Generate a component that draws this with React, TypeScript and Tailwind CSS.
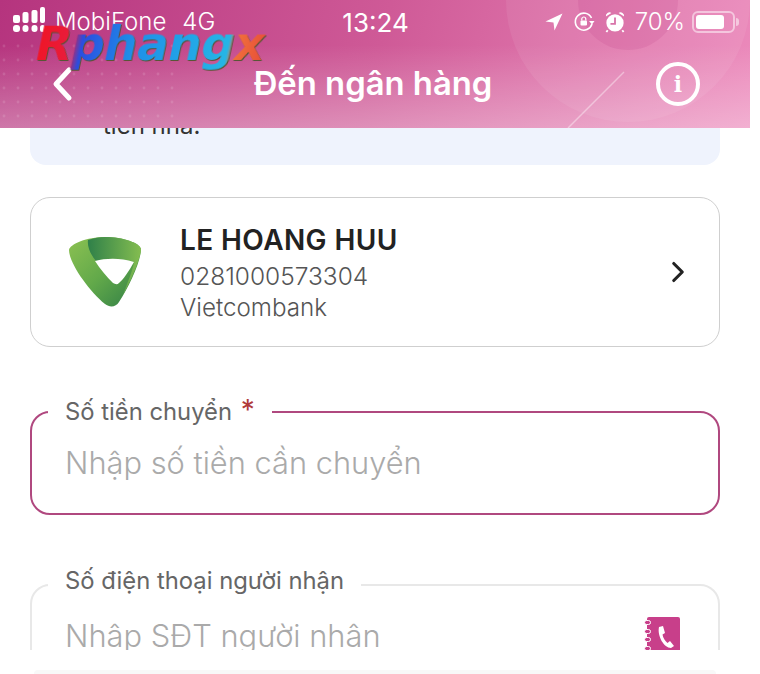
import { ChevronRight } from "lucide-react";

const SignalIcon = () => (
  <svg className="-mt-[5px]" width="33" height="26" viewBox="0 0 33 26" fill="white">
    <rect x="0" y="8" width="7" height="8" rx="2" />
    <rect x="0" y="18" width="7" height="7" rx="3" />
    <rect x="9.5" y="5" width="6" height="11" rx="2" />
    <rect x="9.5" y="18" width="6" height="7" rx="3" />
    <rect x="18.5" y="3" width="6" height="13" rx="2" />
    <rect x="18.5" y="18" width="6" height="7" rx="3" />
    <rect x="27" y="0" width="5" height="16" rx="2" />
    <rect x="27" y="18" width="5" height="7" rx="2.5" />
  </svg>
);

const LocationIcon = () => (
  <svg width="18" height="18" viewBox="0 0 18 18" fill="white">
    <path d="M17.5 0.5 L0.5 8.5 L8.5 9.5 L9.5 17.5 Z" />
  </svg>
);

const RotationLockIcon = () => (
  <svg width="22" height="22" viewBox="0 0 22 22" fill="none" stroke="white" strokeWidth="1.6">
    <path d="M19 13 A8.5 8.5 0 1 1 18.5 7" />
    <path d="M21.5 10 L16 10 L19 13.5 Z" fill="white" stroke="none" />
    <rect x="7.5" y="9.5" width="6.5" height="5" rx="1" fill="white" stroke="none" />
    <path d="M8.8 9.5 V8 a2 2 0 0 1 4 0 V9.5" strokeWidth="1.2" />
  </svg>
);

const AlarmIcon = () => (
  <svg width="20" height="22" viewBox="0 0 22 24" fill="white">
    <circle cx="11" cy="13" r="9.5" />
    <path d="M1 6 A4 4 0 0 1 7 2 Z" />
    <path d="M21 6 A4 4 0 0 0 15 2 Z" />
    <path d="M11 7 V14 H6" stroke="#d873a9" strokeWidth="2" fill="none" />
    <path d="M3 21 L1.5 23 M19 21 L20.5 23" stroke="white" strokeWidth="2" />
  </svg>
);

const VcbLogo = () => (
  <svg width="72" height="70" viewBox="0 0 72 70">
    <defs>
      <linearGradient id="vcbA" x1="0" y1="0" x2="1" y2="1">
        <stop offset="0%" stopColor="#8cc152" />
        <stop offset="50%" stopColor="#62a94a" />
        <stop offset="100%" stopColor="#2f7d46" />
      </linearGradient>
      <linearGradient id="vcbB" x1="0" y1="0" x2="1" y2="0">
        <stop offset="0%" stopColor="#2f8049" />
        <stop offset="100%" stopColor="#84bd50" />
      </linearGradient>
    </defs>
    <path
      d="M0 13 C1 7 18 0 36 0 C54 0 71 6 72 12 C72 24 60 50 50 65 C47 70 41 71 36 67 C20 54 0 26 0 13 Z"
      fill="url(#vcbA)"
    />
    <path
      d="M19 3 C25 1 31 0 36 0 C54 0 71 6 72 12 C72 20 62 44 54 58 C60 42 64 32 65 25 C52 21 38 21 27 24 C22 18 18 10 19 3 Z"
      fill="url(#vcbB)"
    />
    <path d="M26 24 C38 21 52 21 65 25 C60 34 54 43 50 46 C48 48 46 47 44 46 C38 40 31 32 26 24 Z" fill="white" />
  </svg>
);

const ContactBookIcon = () => (
  <div className="relative mt-[3px] flex h-[34px] w-[33px] items-start justify-center rounded-t-[2px] bg-[#c83f8a] pt-[8px]">
    <svg className="ml-[3px]" width="18" height="24" viewBox="0 0 18 24" fill="white">
      <path d="M3 2 L7 1 L9 8 L6.5 9.5 C7 13 9 16 11.5 18 L14 16 L18 21 L15 23 C8 23 1 11 3 2 Z" />
    </svg>
    <div className="absolute left-[-3px] top-[3px] flex flex-col gap-[3.5px]">
      {[0, 1, 2, 3].map((i) => (
        <div key={i} className="h-[5px] w-[7px] rounded-full border border-white bg-[#c83f8a]" />
      ))}
    </div>
  </div>
);

const App = () => {
  return (
    <div className="relative h-[674px] w-[760px] overflow-hidden bg-white font-['Inter',sans-serif]">
      <div className="w-[750px]">
        {/* Header */}
        <header className="relative z-10 h-[128px] overflow-hidden bg-[linear-gradient(105deg,#b5347e_0%,#cf5a97_50%,#ec8bbc_100%)] text-white">
          <div className="absolute inset-0 bg-[linear-gradient(180deg,rgba(255,255,255,0)_35%,rgba(255,255,255,0.32)_100%)]" />
          <svg className="absolute inset-0" width="750" height="128">
            <defs>
              <pattern id="dots" width="14" height="14" patternUnits="userSpaceOnUse">
                <circle cx="4" cy="4" r="1.4" fill="white" fillOpacity="0.12" />
              </pattern>
            </defs>
            <rect x="0" y="38" width="180" height="80" fill="url(#dots)" />
            <circle cx="628" cy="0" r="122" fill="white" fillOpacity="0.07" />
            <circle cx="628" cy="0" r="50" fill="#b5347e" fillOpacity="0.14" />
            <path d="M568 128 L624 72" stroke="white" strokeOpacity="0.4" strokeWidth="1.5" />
          </svg>
          <div className="relative flex h-[44px] items-center justify-between pl-[13px] pr-[13px] text-[24px] font-light">
            <div className="flex w-[214px] items-center gap-[9px]">
              <SignalIcon />
              <span>MobiFone</span>
              <span className="ml-[7px]">4G</span>
            </div>
            <span className="ml-[-3px] text-[26px] font-normal">13:24</span>
            <div className="flex w-[210px] items-center justify-end gap-[10px]">
              <LocationIcon />
              <RotationLockIcon />
              <AlarmIcon />
              <span>70%</span>
              <div className="relative ml-[-3px] mr-[2px] flex h-[22px] w-[43px] items-center rounded-[6px] border-2 border-white/50 p-[2px]">
                <div className="h-full w-[28px] rounded-[3px] bg-white" />
                <div className="absolute right-[-6px] h-[8px] w-[3px] rounded-r-full bg-white/50" />
              </div>
            </div>
          </div>
          <div className="relative flex h-[80px] items-center justify-between pl-[50px] pr-[50px]">
            <svg width="26" height="36" viewBox="0 0 26 36" fill="none" stroke="white" strokeWidth="5" strokeLinecap="round" strokeLinejoin="round">
              <path d="M19 4 L6 18 L19 32" />
            </svg>
            <h1 className="ml-[12px] mr-[-2px] text-[32.8px] font-semibold">Đến ngân hàng</h1>
            <div className="flex h-[44px] w-[44px] items-center justify-center rounded-full border-[4px] border-white font-['DejaVu_Serif',serif] text-[22px] font-bold">
              i
            </div>
          </div>
        </header>

        {/* Note */}
        <div className="mx-[30px] -mt-[8px] flex h-[45px] rounded-b-[16px] bg-[#eff3fd] pl-[73px] text-[24px] leading-[30px] text-[#333]">
          <div className="-mt-[9px]">tiền nhà.</div>
        </div>

        {/* Bank card */}
        <div className="mx-[30px] mt-[32px] flex h-[150px] items-center rounded-[20px] border border-[#cfcfcf] pl-[38px] pr-[24px]">
          <VcbLogo />
          <div className="ml-[39px] flex-1">
            <div className="text-[28px] font-semibold leading-[34px] tracking-[0.4px] text-[#222]">LE HOANG HUU</div>
            <div className="text-[24.5px] font-light leading-[38px] text-[#555]">0281000573304</div>
            <div className="text-[24.2px] font-light leading-[26px] text-[#555]">Vietcombank</div>
          </div>
          <ChevronRight size={34} strokeWidth={2.2} className="text-[#222]" />
        </div>

        {/* So tien chuyen */}
        <fieldset className="mx-[30px] mt-[50px] h-[118px] rounded-[20px] border-2 border-[#b0487f] pl-[16px] pr-[30px]">
          <legend className="px-[17px] text-[23.8px] leading-[30px] text-[#666]">
            Số tiền chuyển <span className="ml-[2px] text-[28px] leading-[20px] text-[#b03a3a]">*</span>
          </legend>
          <div className="pl-[17px] pt-[14px] text-[30.8px] font-light leading-[44px] text-[#aaa]">Nhập số tiền cần chuyển</div>
        </fieldset>

        {/* So dien thoai */}
        <div className="mt-[47px] h-[88px] overflow-hidden pt-[8px]">
          <fieldset className="mx-[30px] h-[118px] rounded-[20px] border-2 border-[#e8e8e8] pl-[16px] pr-[38px]">
            <legend className="-translate-y-[4px] px-[17px] text-[23.8px] leading-[30px] text-[#666]">Số điện thoại người nhận</legend>
            <div className="flex items-start justify-between pl-[17px] pt-[14px]">
              <span className="text-[30.8px] font-light leading-[44px] text-[#aaa]">Nhập SĐT người nhận</span>
              <ContactBookIcon />
            </div>
          </fieldset>
        </div>

        {/* Bottom sheet edge */}
        <div className="mx-[34px] mt-[20px] h-[4px] rounded-t-[6px] bg-[#f8f8f8]" />
      </div>

      {/* Watermark */}
      <div className="absolute left-[36px] top-[14px] z-20 -skew-x-12 bg-[linear-gradient(90deg,#f01525_0%,#e81c3c_15%,#2a4de0_20%,#1e8ee8_42%,#25b5e6_84%,#f0713a_87%,#e8503a_100%)] bg-clip-text font-['DejaVu_Sans',sans-serif] text-[47px] font-bold leading-[60px] tracking-[-0.5px] text-transparent drop-shadow-[1px_1px_0_#553]">
        Rphangx
      </div>
    </div>
  );
};

export default App;
